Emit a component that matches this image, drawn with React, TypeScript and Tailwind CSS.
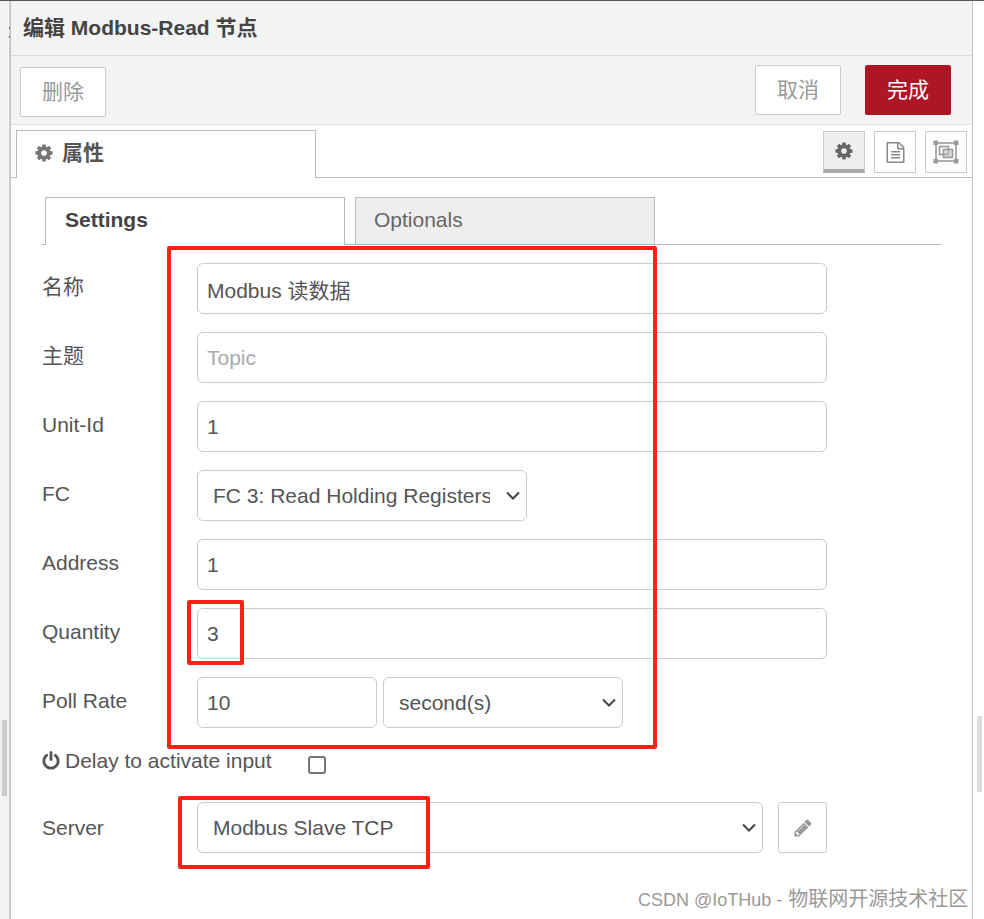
const font = { fontFamily: '"Liberation Sans", "Noto Sans CJK SC", sans-serif' };

const inputClass =
  "h-[51px] rounded-[6px] border border-[#ccc] bg-white px-[9px] pt-[1px] text-[21px] text-[#555] outline-none placeholder:text-[#aaa]";
const selectClass =
  "h-[51px] w-full appearance-none rounded-[6px] border border-[#ccc] bg-white pl-[15px] pr-[36px] text-[21px] text-[#555] outline-none";

const cogPath =
  "M1152 896q0-106-75-181t-181-75-181 75-75 181 75 181 181 75 181-75 75-181zm512-109v222q0 12-8 23t-20 13l-185 28q-19 54-39 91 35 50 107 138 10 12 10 25t-9 23q-27 37-99 108t-94 71q-12 0-26-9l-138-108q-44 23-91 38-16 136-29 186-7 28-36 28h-222q-14 0-24.500-8.500t-11.500-21.500l-28-184q-49-16-90-37l-141 107q-10 9-25 9-14 0-25-11-126-114-165-168-7-10-7-23 0-12 8-23 15-21 51-66.500t54-70.500q-27-50-41-99l-183-27q-13-2-21-12.500t-8-23.500v-222q0-12 8-23t19-13l186-28q14-46 39-92-40-57-107-138-10-12-10-24 0-10 9-23 26-36 98.500-107.500t94.500-71.500q13 0 26 10l138 107q44-23 91-38 16-136 29-186 7-28 36-28h222q14 0 24.500 8.500t11.500 21.500l28 184q49 16 90 37l142-107q9-9 24-9 13 0 25 10 129 119 165 170 7 8 7 22 0 12-8 23-15 21-51 66.500t-54 70.500q26 50 41 98l183 28q13 2 21 12.500t8 23.500z";
const filePath =
  "M1596 380q28 28 48 76t20 88v1152q0 40-28 68t-68 28h-1344q-40 0-68-28t-28-68v-1600q0-40 28-68t68-28h896q40 0 88 20t76 48zm-444-244v376h376q-10-29-22-41l-313-313q-12-12-41-22zm384 1528v-1024h-416q-40 0-68-28t-28-68v-416h-768v1536h1280zm-1024-864q0-14 9-23t23-9h704q14 0 23 9t9 23v64q0 14-9 23t-23 9h-704q-14 0-23-9t-9-23v-64zm736 224q14 0 23 9t9 23v64q0 14-9 23t-23 9h-704q-14 0-23-9t-9-23v-64q0-14 9-23t23-9h704zm0 256q14 0 23 9t9 23v64q0 14-9 23t-23 9h-704q-14 0-23-9t-9-23v-64q0-14 9-23t23-9h704z";
const powerPath =
  "M1664 896q0 156-61 298t-164 245-245 164-298 61-298-61-245-164-164-245-61-298q0-182 80.500-343t226.500-270q43-32 95.500-25t83.500 50q32 42 24.500 94.500t-49.500 84.500q-98 74-151.500 181t-53.500 228q0 104 40.500 198.500t109.500 163.500 163.500 109.500 198.500 40.500 198.500-40.500 163.500-109.500 109.500-163.500 40.500-198.500q0-121-53.500-228t-151.500-181q-42-32-49.500-84.500t24.500-94.500q31-43 84-50t95 25q146 109 226.500 270t80.500 343zm-640-768v640q0 52-38 90t-90 38-90-38-38-90v-640q0-52 38-90t90-38 90 38 38 90z";
const pencilPath =
  "M491 1536l91-91-235-235-91 91v107h128v128h107zm523-928q0-22-22-22-10 0-17 7l-542 542q-7 7-7 17 0 22 22 22 10 0 17-7l542-542q7-7 7-17zm-54-192l416 416-832 832h-416v-416zm683 96q0 53-37 90l-166 166-416-416 166-165q36-38 90-38 53 0 91 38l235 234q37 39 37 91z";

function Fa({ d, size, color }: { d: string; size: number; color: string }) {
  return (
    <svg width={size} height={size} viewBox="0 0 1792 1792" fill={color} className="shrink-0">
      <path d={d} />
    </svg>
  );
}

function ExpandIcon() {
  return (
    <svg width="26" height="24" viewBox="0 0 26 24" fill="none" stroke="#999" strokeWidth="1.6">
      <rect x="3" y="3" width="20" height="18" />
      <rect x="6.500" y="6.500" width="9" height="8" />
      <rect x="10.500" y="9.500" width="9" height="8" fill="#bbb" fillOpacity="0.5" />
      <rect x="1" y="1" width="3.500" height="3.500" fill="#999" strokeWidth="1" />
      <rect x="21.500" y="1" width="3.500" height="3.500" fill="#999" strokeWidth="1" />
      <rect x="1" y="19.500" width="3.500" height="3.500" fill="#999" strokeWidth="1" />
      <rect x="21.500" y="19.500" width="3.500" height="3.500" fill="#999" strokeWidth="1" />
    </svg>
  );
}

function Row({ label, labelPad = "pt-[8px]", children }: { label: string; labelPad?: string; children: React.ReactNode }) {
  return (
    <div className="flex h-[51px]">
      <label className={`w-[155px] text-[21px] leading-[32px] text-[#555] ${labelPad}`}>{label}</label>
      {children}
    </div>
  );
}

function Select({ width, value }: { width: string; value: string }) {
  return (
    <div className={`relative ${width}`}>
      <select className={selectClass} defaultValue={value}>
        <option value={value}>{value}</option>
      </select>
      <svg
        width="14"
        height="9"
        viewBox="0 0 14 9"
        fill="none"
        stroke="#444"
        strokeWidth="2"
        className="pointer-events-none absolute right-[7px] top-[21px]"
      >
        <path d="M1 1.500l6 6 6-6" />
      </svg>
    </div>
  );
}

export default function App() {
  return (
    <div style={font} className="relative flex h-[919px] w-[984px] overflow-hidden border-t border-t-[#555] bg-white">
      {/* left strip */}
      <div className="w-[10px] shrink-0 border-r border-r-[#d4d4d4] bg-[#f3f3f3] pl-[2px] pt-[719px]">
        <div className="h-[76px] w-[5px] bg-[#ccc]" />
      </div>

      {/* editor tray */}
      <div className="flex w-[963px] shrink-0 flex-col border-x border-x-[#c4c4c4]">
        <div className="flex h-[55px] items-center border-b border-[#ddd] bg-[#f3f3f3] pl-[12px] text-[21px] font-bold text-[#444]">
          编辑 Modbus-Read 节点
        </div>

        <div className="flex h-[69px] items-start justify-between border-b border-[#ddd] bg-[#f3f3f3] pl-[9px] pr-[21px] pt-[9px]">
          <button className="mt-[2px] h-[50px] w-[86px] rounded-[2px] border border-[#ccc] bg-white text-[21px] text-[#999]">
            删除
          </button>
          <div className="flex gap-[24px]">
            <button className="h-[50px] w-[86px] rounded-[2px] border border-[#ccc] bg-white text-[21px] text-[#999]">
              取消
            </button>
            <button className="h-[50px] w-[86px] rounded-[2px] bg-[#ad1625] text-[21px] text-white">完成</button>
          </div>
        </div>

        {/* outer tabs */}
        <div className="flex h-[53px] items-end justify-between border-b border-[#bbb] pl-[5px] pr-[5px]">
          <div className="-mb-px flex h-[48px] w-[300px] items-center gap-[8px] border border-b-0 border-[#bbb] bg-white pb-[3px] pl-[17px] text-[21px] font-bold text-[#555]">
            <Fa d={cogPath} size={20} color="#777" />
            属性
          </div>
          <div className="mb-[4px] flex gap-[9px]">
            <div className="flex h-[42px] w-[42px] items-center justify-center border border-b-[4px] border-[#ccc] border-b-[#aaa] bg-[#eee]">
              <Fa d={cogPath} size={20} color="#666" />
            </div>
            <div className="flex h-[42px] w-[42px] items-center justify-center border border-[#ccc]">
              <Fa d={filePath} size={21} color="#888" />
            </div>
            <div className="flex h-[42px] w-[42px] items-center justify-center border border-[#ccc]">
              <ExpandIcon />
            </div>
          </div>
        </div>

        {/* inner tabs */}
        <div className="ml-[30px] mr-[31px] mt-[19px] flex h-[48px] items-end gap-[10px] border-b border-[#bbb] pl-[4px]">
          <div className="-mb-px flex h-[48px] w-[300px] items-center border border-b-0 border-[#bbb] bg-white pb-[3px] pl-[19px] text-[21px] font-bold text-[#444]">
            Settings
          </div>
          <div className="flex h-[47px] w-[300px] items-center border border-b-0 border-[#bbb] bg-[#eee] pb-[3px] pl-[18px] text-[21px] text-[#666]">
            Optionals
          </div>
        </div>

        {/* form */}
        <div className="flex flex-col gap-[18px] pl-[31px] pt-[18px]">
          <Row label="名称">
            <input className={`${inputClass} w-[630px]`} defaultValue="Modbus 读数据" />
          </Row>
          <Row label="主题">
            <input className={`${inputClass} w-[630px]`} placeholder="Topic" />
          </Row>
          <Row label="Unit-Id">
            <input className={`${inputClass} w-[630px]`} defaultValue="1" />
          </Row>
          <Row label="FC">
            <Select width="w-[330px]" value="FC 3: Read Holding Registers" />
          </Row>
          <Row label="Address">
            <input className={`${inputClass} w-[630px]`} defaultValue="1" />
          </Row>
          <Row label="Quantity">
            <input className={`${inputClass} w-[630px]`} defaultValue="3" />
          </Row>
          <Row label="Poll Rate">
            <div className="flex gap-[6px]">
              <input className={`${inputClass} w-[180px]`} defaultValue="10" />
              <Select width="w-[240px]" value="second(s)" />
            </div>
          </Row>
          <div className="flex h-[38px] items-start">
            <label className="-ml-[1px] flex w-[267px] items-center gap-[4px] text-[21px] leading-[30px] text-[#555]">
              <Fa d={powerPath} size={20} color="#555" />
              Delay to activate input
            </label>
            <span className="mt-[10px] h-[18px] w-[18px] rounded-[3px] border-2 border-[#767676] bg-white" />
          </div>
          <Row label="Server" labelPad="pt-[10px]">
            <Select width="w-[566px]" value="Modbus Slave TCP" />
            <button className="ml-[15px] flex h-[51px] w-[49px] items-center justify-center rounded-[3px] border border-[#ccc] bg-white">
              <Fa d={pencilPath} size={20} color="#999" />
            </button>
          </Row>
        </div>
      </div>

      {/* right strip */}
      <div className="grow bg-white pl-[4px] pt-[715px]">
        <div className="h-[76px] w-[5px] bg-[#ddd]" />
      </div>

      {/* resize handle dots */}
      <div className="absolute left-[9px] top-[26px] h-[2px] w-[1px] bg-[#666]" />
      <div className="absolute left-[9px] top-[35px] h-[2px] w-[1px] bg-[#666]" />

      {/* red annotations */}
      <div className="absolute left-[167px] top-[245px] h-[503px] w-[490px] rounded-[2px] border-4 border-[#ff2015]" />
      <div className="absolute left-[187px] top-[599px] h-[65px] w-[57px] rounded-[2px] border-4 border-[#ff2015]" />
      <div className="absolute left-[178px] top-[795px] h-[73px] w-[252px] rounded-[2px] border-4 border-[#ff2015]" />

      {/* watermark */}
      <div className="absolute left-[638px] top-[885px] text-[18px] leading-[26px] text-[#999]">
        CSDN @IoTHub - <span className="ml-[1px] text-[20px]">物联网开源技术社区</span>
      </div>
    </div>
  );
}
